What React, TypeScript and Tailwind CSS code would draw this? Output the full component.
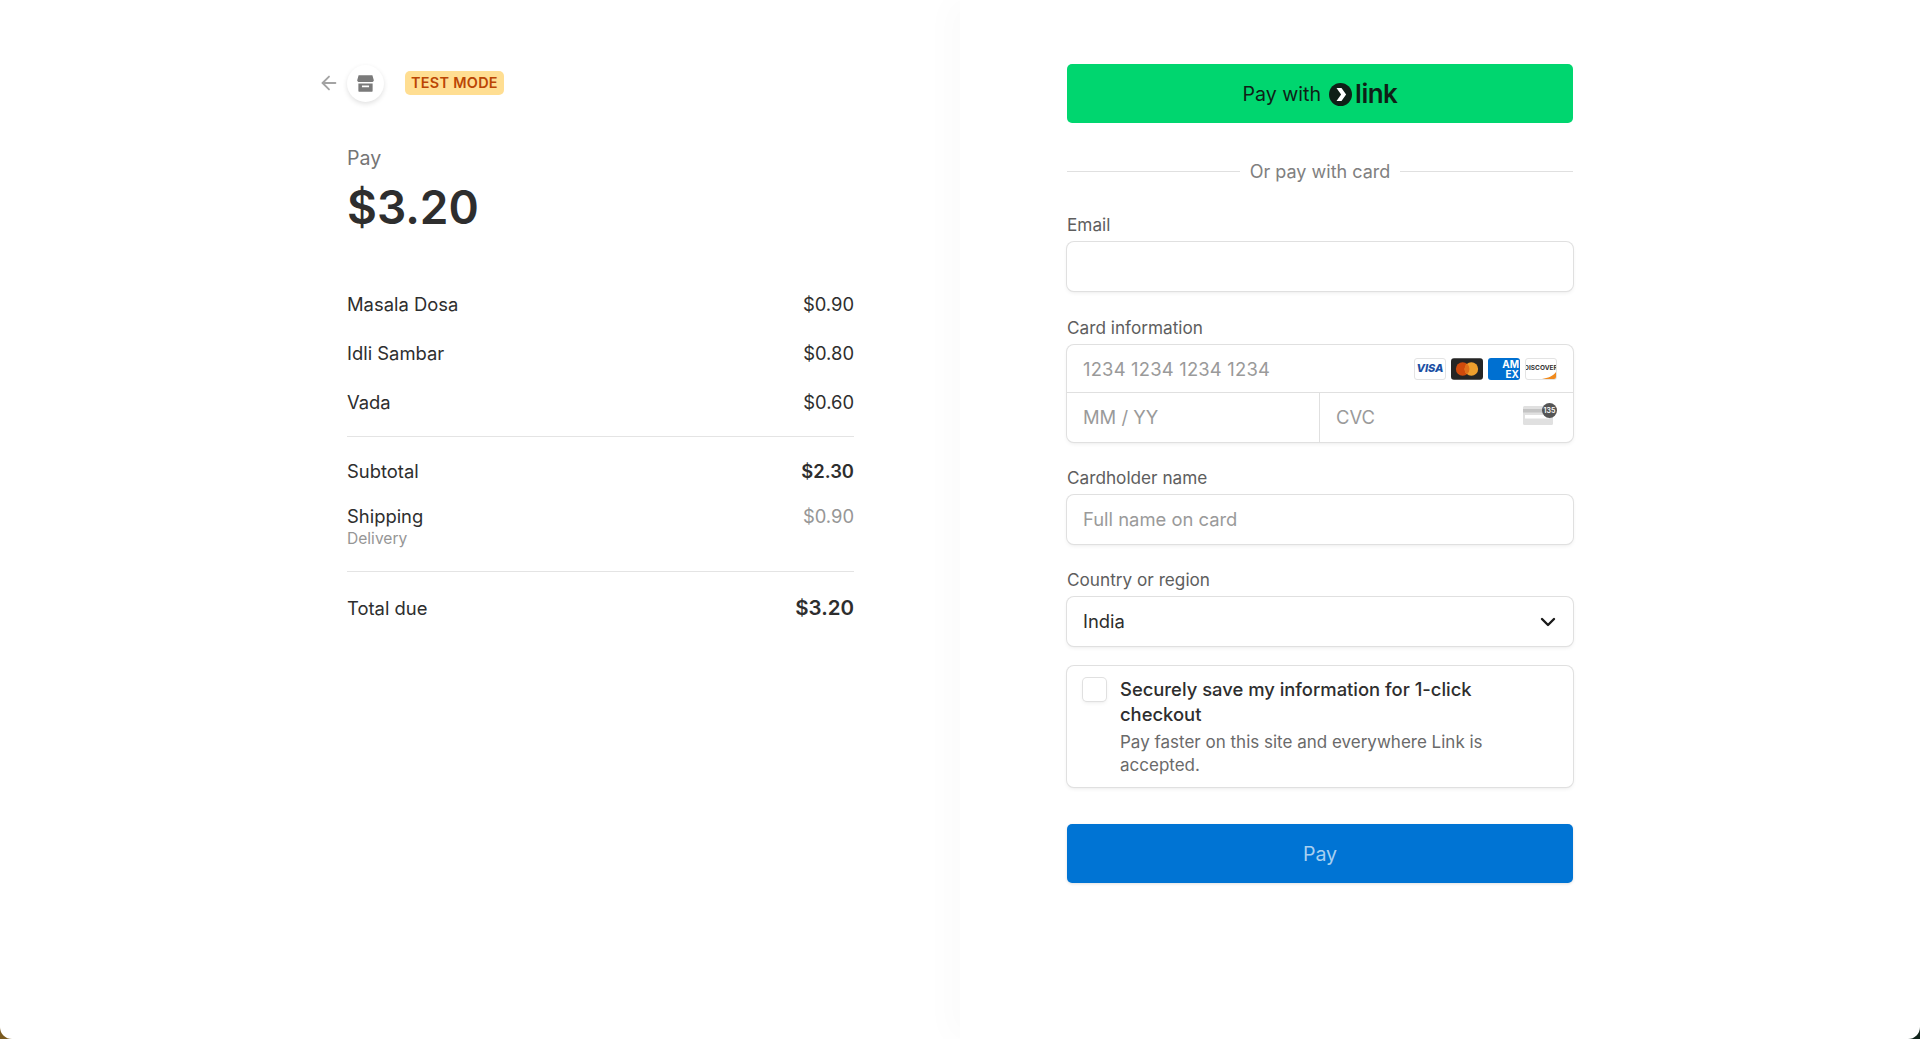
import { ArrowLeft, ChevronDown } from "lucide-react";

const items = [
  { name: "Masala Dosa", price: "$0.90" },
  { name: "Idli Sambar", price: "$0.80" },
  { name: "Vada", price: "$0.60" },
];

const fieldShadow =
  "shadow-[0_0_0_1px_#e0e0e0,0_2px_4px_rgba(0,0,0,0.07),0_1px_1.5px_rgba(0,0,0,0.05)]";

function StoreIcon() {
  return (
    <svg width="19" height="19" viewBox="0 0 16 16" fill="#7a7a7a">
      <path d="M2.2 1h11.6l1.2 4.2c0 .9-.8 1.6-1.7 1.6H2.7C1.8 6.8 1 6.1 1 5.2L2.2 1z" />
      <path d="M2 8h12v6a1 1 0 0 1-1 1H3a1 1 0 0 1-1-1V8zm3 1.6v1.6h6V9.6H5z" fillRule="evenodd" />
    </svg>
  );
}

function LinkMark() {
  return (
    <svg width="23" height="23" viewBox="0 0 23 23">
      <circle cx="11.5" cy="11.5" r="11.5" fill="#0f1f17" />
      <path d="M7.5 5h5l4.6 6.5-4.6 6.5h-5l4.6-6.5L7.5 5z" fill="#ffffff" />
    </svg>
  );
}

function VisaIcon() {
  return (
    <div className="flex h-[22px] w-[32px] items-center justify-center rounded-[3px] border border-[#e3e3e3] bg-white">
      <span className="text-[11px] leading-none font-extrabold text-[#1a4fa3] italic">VISA</span>
    </div>
  );
}

function MastercardIcon() {
  return (
    <svg width="32" height="22" viewBox="0 0 33 22">
      <rect width="33" height="22" rx="3" fill="#252525" />
      <circle cx="12" cy="11" r="7" fill="#cf4a0c" />
      <circle cx="21" cy="11" r="7" fill="#ee9f2d" />
      <path d="M16.5 5.6a7 7 0 0 1 0 10.8 7 7 0 0 1 0-10.8z" fill="#e0701a" />
    </svg>
  );
}

function AmexIcon() {
  return (
    <div className="flex h-[22px] w-[32px] items-center justify-end overflow-hidden rounded-[3px] bg-[#0070d1] pr-[1px]">
      <span className="text-right text-[10px] leading-[10px] font-bold text-white">
        AM
        <br />
        EX
      </span>
    </div>
  );
}

function DiscoverIcon() {
  return (
    <div className="relative flex h-[22px] w-[32px] items-center justify-center overflow-hidden rounded-[3px] border border-[#e3e3e3] bg-white">
      <span className="text-[6.5px] leading-none font-bold text-[#333]">DISCOVER</span>
      <svg className="absolute right-0 bottom-0" width="14" height="7" viewBox="0 0 14 7">
        <path d="M14 0v7H0C6 6 11 4 14 0z" fill="#f08a1d" />
      </svg>
    </div>
  );
}

function CvcIcon() {
  return (
    <div className="relative h-[22px] w-[34px]">
      <svg className="absolute bottom-0 left-0" width="30" height="19" viewBox="0 0 30 19">
        <rect width="30" height="19" rx="1.5" fill="#e0e0e0" />
        <rect y="3" width="30" height="3.5" fill="#c4c4c4" />
        <rect x="2" y="9" width="24" height="3.5" fill="#ffffff" />
      </svg>
      <div className="absolute top-0 right-0 flex h-[15px] w-[15px] items-center justify-center rounded-full bg-[#555]">
        <span className="text-[7px] leading-none font-semibold text-white">135</span>
      </div>
    </div>
  );
}

export default function App() {
  return (
    <div className="h-screen w-full overflow-hidden bg-[linear-gradient(90deg,#7a5a20_0%,#7a5a20_1%,#10241c_99%)] font-['Inter',sans-serif]">
      <div className="flex h-full w-full overflow-hidden rounded-b-[12px] bg-white">
        {/* summary */}
        <div className="h-full w-[960px] pt-[65px] pl-[318px]">
          <div className="flex h-[36px] items-center">
            <ArrowLeft size={22} strokeWidth={2} className="text-[#a3a3a3]" />
            <div className="ml-[7px] flex h-[37px] w-[37px] items-center justify-center rounded-full bg-white shadow-[0_2px_5px_rgba(0,0,0,0.12)]">
              <StoreIcon />
            </div>
            <span className="ml-[21px] rounded-[5px] bg-[#ffde92] px-[6px] py-[2px] text-[14.4px] leading-[20px] font-semibold tracking-[0.3px] text-[#bb4504]">
              TEST MODE
            </span>
          </div>

          <div className="w-[536px] pl-[29px]">
            <div className="mt-[44px] text-[19.6px] leading-[26px] text-[#757575]">Pay</div>
            <div className="mt-[8px] text-[46px] leading-[56px] font-semibold text-[#2e2e2e]">$3.20</div>

            <div className="mt-[58px] flex flex-col gap-[27px]">
              {items.map((item) => (
                <div key={item.name} className="flex justify-between text-[18.4px] leading-[22px] text-[#2e2e2e]">
                  <span>{item.name}</span>
                  <span>{item.price}</span>
                </div>
              ))}
            </div>

            <div className="mt-[23px] border-t border-[#e4e4e4]" />

            <div className="mt-[23px] flex justify-between text-[18.4px] leading-[22px] text-[#2e2e2e]">
              <span>Subtotal</span>
              <span className="font-semibold">$2.30</span>
            </div>

            <div className="mt-[23px] flex justify-between">
              <div>
                <div className="text-[18.4px] leading-[22px] text-[#2e2e2e]">Shipping</div>
                <div className="mt-[1px] text-[15.6px] leading-[22px] text-[#969696]">Delivery</div>
              </div>
              <span className="text-[18.4px] leading-[22px] text-[#969696]">$0.90</span>
            </div>

            <div className="mt-[21px] border-t border-[#e4e4e4]" />

            <div className="mt-[23px] flex items-center justify-between text-[#2e2e2e]">
              <span className="text-[18.4px] leading-[26px]">Total due</span>
              <span className="text-[20.5px] leading-[26px] font-semibold">$3.20</span>
            </div>
          </div>
        </div>

        {/* payment */}
        <div className="h-full flex-1 pt-[64px] pl-[107px] shadow-[-12px_0_30px_rgba(0,0,0,0.018)]">
          <div className="w-[506px]">
            <div className="flex h-[59px] items-center justify-center rounded-[5px] bg-[#00d66f] text-[#0f1f17]">
              <span className="mt-[2px] text-[19.6px]">Pay with</span>
              <span className="mt-[2px] mr-[3px] ml-[8px]"><LinkMark /></span>
              <span className="text-[26px] leading-none font-semibold tracking-[-0.5px]">link</span>
            </div>

            <div className="mt-[37px] flex h-[22px] items-center">
              <div className="h-px flex-1 bg-[#e0e0e0]" />
              <span className="mx-[10px] text-[18px] text-[#808080]">Or pay with card</span>
              <div className="h-px flex-1 bg-[#e0e0e0]" />
            </div>

            <label className="mt-[33px] block text-[17.2px] leading-[20px] text-[#5e5e5e]">Email</label>
            <div className={`mt-[7px] h-[49px] rounded-[7px] bg-white ${fieldShadow}`} />

            <label className="mt-[27px] block text-[17.2px] leading-[20px] text-[#5e5e5e]">Card information</label>
            <div className={`mt-[7px] rounded-[7px] bg-white ${fieldShadow}`}>
              <div className="flex h-[48px] items-center justify-between border-b border-[#e0e0e0] pr-[16px] pl-[16px]">
                <span className="mt-[2px] text-[18.4px] tracking-[0.2px] text-[#9a9a9a]">1234 1234 1234 1234</span>
                <div className="flex gap-[5px]">
                  <VisaIcon />
                  <MastercardIcon />
                  <AmexIcon />
                  <DiscoverIcon />
                </div>
              </div>
              <div className="flex h-[49px]">
                <div className="flex w-[253px] items-center border-r border-[#e0e0e0] pl-[16px] text-[18.4px] text-[#9a9a9a]">MM / YY</div>
                <div className="flex flex-1 items-center justify-between pr-[16px] pl-[16px] text-[18.4px] text-[#9a9a9a]">
                  <span>CVC</span>
                  <div className="mb-[8px]"><CvcIcon /></div>
                </div>
              </div>
            </div>

            <label className="mt-[26px] block text-[17.2px] leading-[20px] text-[#5e5e5e]">Cardholder name</label>
            <div className={`mt-[7px] flex h-[49px] items-center rounded-[7px] bg-white pl-[16px] text-[18.4px] text-[#9a9a9a] ${fieldShadow}`}>
              Full name on card
            </div>

            <label className="mt-[26px] block text-[17.2px] leading-[20px] text-[#5e5e5e]">Country or region</label>
            <div className={`mt-[7px] flex h-[49px] items-center justify-between rounded-[7px] bg-white pr-[13px] pl-[16px] text-[18.4px] text-[#2e2e2e] ${fieldShadow}`}>
              <span>India</span>
              <ChevronDown size={24} strokeWidth={2.4} className="text-[#1a1a1a]" />
            </div>

            <div className={`mt-[20px] flex h-[121px] rounded-[7px] bg-white pt-[11px] pl-[16px] ${fieldShadow}`}>
              <div className={`mt-[1px] h-[23px] w-[23px] shrink-0 rounded-[4px] bg-white ${fieldShadow}`} />
              <div className="ml-[14px] w-[400px]">
                <div className="text-[18.4px] leading-[25px] font-medium text-[#2e2e2e]">Securely save my information for 1-click checkout</div>
                <div className="mt-[4px] text-[17px] leading-[22.5px] text-[#6a6a6a]">Pay faster on this site and everywhere Link is accepted.</div>
              </div>
            </div>

            <div className="mt-[37px] flex h-[59px] items-center justify-center rounded-[5px] bg-[#0074d4] pt-[2px] text-[19.6px] text-[#a8d0f0] shadow-[0_1px_3px_rgba(0,0,0,0.12)]">
              Pay
            </div>
          </div>
        </div>
      </div>
    </div>
  );
}
